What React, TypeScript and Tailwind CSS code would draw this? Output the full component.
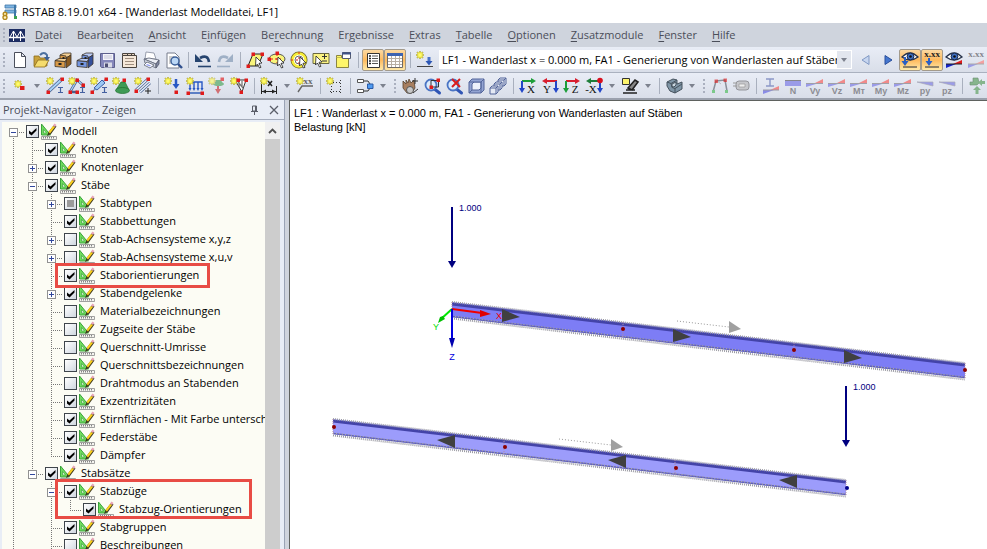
import React from 'react';
import clsx from 'clsx';

/* ---------- shared icon parts ---------- */

const Star = () => (
  <g>
    <path d="M5 1v8M1 5h8M2 2l6 6M8 2l-6 6" stroke="#a39c4a" strokeWidth="1.600" />
    <path d="M5 1.500v7M1.500 5h7M2.500 2.500l5 5M7.500 2.500l-5 5" stroke="#f8f03a" strokeWidth="1.200" />
    <circle cx="5" cy="5" r="1.800" fill="#fffa70" />
  </g>
);

const Dot = ({ x, y }: { x: number; y: number }) => (
  <rect x={x - 1.5} y={y - 1.5} width="3.5" height="3.5" fill="#e01b1b" />
);

const Profile = () => <path d="M13 11.500h5M15.500 11.500v5M13 16.500h5" stroke="#4460a0" strokeWidth="1.200" />;

const Cabinet = ({ front, top, side }: { front: string; top: string; side: string }) => (
  <g stroke="#3c3428" strokeWidth=".8" strokeLinejoin="round">
    <path d="M7 5l4-2h7v2l-5 3z" fill={top} />
    <path d="M13 8l5-3v9l-5 4z" fill={side} />
    <path d="M7 5l6 1v6l-6-.5z" fill={front} />
    <path d="M2 10.500l10 1v6l-10-1z" fill={front} />
    <path d="M2 10.500l4-2h8l-2 3z" fill={top} />
    <path d="M9.500 8h2M5.500 14h3" stroke="#222" strokeWidth="1.800" />
  </g>
);

const Diagram = ({ text, up }: { text: string; up?: boolean }) => (
  <g>
    {up ? (
      <>
        <path d="M1 8h10L1 11z" fill="#9a9be8" />
        <path d="M9 7.500L18 3v4.500z" fill="#f08a8a" />
        <path d="M1 7.500h17" stroke="#a0a0a8" strokeWidth="1" />
      </>
    ) : (
      <path d="M2 6h16v4L10 8z" fill="#9a9be8" stroke="#a9a9b4" strokeWidth=".7" />
    )}
    <text x="10" y="18" textAnchor="middle" fontSize="9" fontWeight="700" fill="#8d8d93" fontFamily="Liberation Sans, sans-serif">
      {text}
    </text>
  </g>
);

const ViewAxis = ({ text, a, b, flip }: { text: string; a: string; b: string; flip?: boolean }) => (
  <g>
    <path d={flip ? 'M17 5H6' : 'M4 5h11'} stroke={a} strokeWidth="2" />
    <path d={flip ? 'M7 2v6L2 5z' : 'M13 2v6l5-3z'} fill={a} />
    <path d={flip ? 'M16 5v9' : 'M4 5v9'} stroke={b} strokeWidth="2" />
    <path d={flip ? 'M13 12h6l-3 5z' : 'M1 12h6l-3 5z'} fill={b} />
    <text x={flip ? 7 : 13} y="17" textAnchor="middle" fontSize="11" fill="#111" fontFamily="Liberation Serif, serif">
      {text}
    </text>
  </g>
);

const Lens = () => (
  <g>
    <path d="M12.500 13l5 4" stroke="#2f55b5" strokeWidth="3" strokeLinecap="round" />
    <circle cx="9" cy="9" r="5.500" fill="#dcebfb" stroke="#4a74c4" strokeWidth="1.800" />
  </g>
);

const Eye = ({ y = 0 }: { y?: number }) => (
  <g transform={`translate(0 ${y})`}>
    <path d="M2 8Q10 0 18 8Q10 14 2 8z" fill="#fff" stroke="#26324a" strokeWidth="1.300" />
    <circle cx="10.500" cy="7.500" r="3.400" fill="#3e6fc2" stroke="#1c2b4d" />
    <circle cx="10.500" cy="7.500" r="1.300" fill="#111" />
  </g>
);

const XXX = ({ fill }: { fill: string }) => (
  <text x="10" y="7" textAnchor="middle" fontSize="9" fontWeight="700" fill={fill} fontFamily="Liberation Serif, serif">
    x.xx
  </text>
);

const Cursor = () => (
  <path d="M11 7l6 6-3 .3 2 4-1.500.7-2-4-2 2z" fill="#fff" stroke="#222" strokeWidth=".8" />
);

/* ---------- toolbar icons, 20 x 20 ---------- */

const icons: Record<string, React.ReactNode> = {
  'Neu': <path d="M5.500 2.500h7l4 4v11h-11z M12.500 2.500v4h4" fill="#fff" stroke="#4b4f5c" />,
  'Öffnen': (
    <g strokeLinejoin="round">
      <path d="M3 16V6h5l1 2h7v8z" fill="#c9a23c" stroke="#8a6b1c" strokeWidth=".8" />
      <path d="M3 17l4-7h11l-4 7z" fill="#f5dc6e" stroke="#8a6b1c" strokeWidth=".8" />
      <path d="M9 5q4-4 7 0v4" fill="none" stroke="#4b6f9f" strokeWidth="2" />
      <path d="M13 7h6l-3 4z" fill="#3d5f94" />
    </g>
  ),
  'Projekt-Manager': <Cabinet front="#d99a48" top="#f3cf95" side="#8a5a20" />,
  'Blockmanager': <Cabinet front="#7396e2" top="#b9caf5" side="#34509c" />,
  'Speichern': (
    <g>
      <path d="M3.500 3.500h14v14h-13l-1-1z" fill="#8587bb" stroke="#5d5f8c" />
      <path d="M6 4h10v6H6z" fill="#f4f4fa" />
      <path d="M7 6h8M7 8h8" stroke="#c5c5d6" />
      <path d="M7 12.500h8v5H7z" fill="#d9dae6" />
      <path d="M8 13.500h3v3.500H8z" fill="#4d4f74" />
    </g>
  ),
  'Protokoll': (
    <g stroke="#4a443f">
      <path d="M3.500 3.500h5v2h-5zM8.500 3.500h4v2h-4zM12.500 3.500h3v2h-3z" fill="#e8d4c0" />
      <path d="M3.500 5.500h14v12h-14z" fill="#f6e8d9" />
      <path d="M6 8.500h9M6 11.500h9M6 14.500h9" stroke="#a08f80" />
    </g>
  ),
  'Drucken': (
    <g strokeLinejoin="round" strokeWidth=".9">
      <path d="M4 9l1-7 8 1 2 6z" fill="#fff" stroke="#8e95a5" />
      <path d="M3 9l5-1 10 2-3 4z" fill="#eceff5" stroke="#6a7081" />
      <path d="M3 9l12 5v4L4 13z" fill="#cfd4de" stroke="#6a7081" />
      <path d="M15 14l3-4v4l-3 4z" fill="#8088a0" stroke="#5a6073" />
      <path d="M6 12l7 3-4 3-6-3z" fill="#fff" stroke="#6a7081" />
      <path d="M6 14l4 1.500-1 1-4-1.500z" fill="#8f9df0" />
    </g>
  ),
  'Druckvorschau': (
    <g>
      <path d="M4 3h8l4 4v11H4z" fill="#fff" stroke="#777d8c" />
      <path d="M6 7h5M6 9h3M6 11h2M6 13h3" stroke="#999" />
      <circle cx="12" cy="11" r="4" fill="#bcd8f6" stroke="#3b5f98" strokeWidth="1.400" />
      <path d="M15 14l4 4" stroke="#2f4f8d" strokeWidth="2.400" />
    </g>
  ),
  'Rückgängig': (
    <g>
      <path d="M7 8q8-4 9 4" fill="none" stroke="#26446f" strokeWidth="2.600" />
      <path d="M2 4v8h8z" fill="#26446f" />
      <path d="M5 16.500h13" stroke="#26446f" strokeWidth="1.600" />
    </g>
  ),
  'Wiederherstellen': (
    <g>
      <path d="M13 8q-8-4-9 4" fill="none" stroke="#9fb0c6" strokeWidth="2.600" />
      <path d="M18 4v8h-8z" fill="#9fb0c6" />
      <path d="M2 16.500h13" stroke="#9fb0c6" strokeWidth="1.600" />
    </g>
  ),
  'Auswahl Rhomboid': (
    <g>
      <path d="M3 16L8 4h10l-5 12z" fill="#f8f47a" stroke="#222" />
      <Dot x={3} y={16} /><Dot x={8} y={4} /><Dot x={17} y={4} />
      <Cursor />
    </g>
  ),
  'Auswahl Ellipse': (
    <g>
      <ellipse cx="10" cy="9" rx="8" ry="5" fill="#f8f47a" stroke="#555" />
      <path d="M10 4v9M4 9h12" stroke="#e01b1b" strokeDasharray="2 2" />
      <Dot x={2} y={9} /><Dot x={10} y={3} />
      <Cursor />
    </g>
  ),
  'Auswahl Ring': (
    <g>
      <circle cx="10" cy="10" r="6.500" stroke="#6b6526" strokeWidth="4" />
      <circle cx="10" cy="10" r="6.500" fill="#fff" stroke="#f8ee3a" strokeWidth="2.500" />
      <circle cx="10" cy="10" r="4" stroke="#444" strokeWidth=".8" />
      <path d="M10 2v14M2 10h14" stroke="#e01b1b" strokeDasharray="2 3" />
      <Cursor />
    </g>
  ),
  'Sonderauswahl': (
    <g>
      <path d="M2 3.500h16v10H2z" fill="#fbf382" stroke="#6a6840" />
      <path d="M11 6.500h5M13.500 4v5M11 11h5" stroke="#333" />
      <path d="M5 6l6 6-3 .3 2 4-1.500.7-2-4-2 2z" fill="#fff" stroke="#222" strokeWidth=".8" />
    </g>
  ),
  'Neues Fenster': (
    <g>
      <path d="M3.500 7.500h12v10h-12z" fill="#fdf56a" stroke="#8b8540" />
      <path d="M3.500 7.500v-2h5v2" fill="#fdf56a" stroke="#8b8540" />
      <path d="M9.500 2.500h8v6h-8z" fill="#fff" stroke="#555b70" />
      <path d="M9 3.500h9" stroke="#3f5387" strokeWidth="2" />
    </g>
  ),
  'Navigator': (
    <g>
      <path d="M4.500 3.500h12v14h-12z" fill="#fff" stroke="#333" />
      <path d="M6 6h2M6 8.500h2M6 11h2M6 13.500h2" stroke="#222" strokeWidth="1.500" />
      <path d="M9 6h6M9 8.500h6M9 11h6M9 13.500h6" stroke="#555" strokeWidth="1.200" />
    </g>
  ),
  'Tabellen': (
    <g>
      <path d="M2.500 3.500h15v14h-15z" fill="#fff" stroke="#6d6a66" />
      <path d="M2 4.500h16" stroke="#3d63b0" strokeWidth="3" />
      <path d="M3 8.500h14M3 11.500h14M3 14.500h14M6.500 6v11M10.500 6v11M14.500 6v11" stroke="#b7aea3" />
    </g>
  ),
  'Neuer Lastfall': (
    <g>
      <Star />
      <path d="M2 16.500h16" stroke="#444" />
      <path d="M14 7v5" stroke="#4a74c8" strokeWidth="3" />
      <path d="M10.500 11h7L14 15.500z" fill="#2d57b5" />
    </g>
  ),
  'Vorheriger Lastfall': <path d="M13 5.500v9l-7-4.500z" fill="#c7d6f0" stroke="#8199c4" />,
  'Nächster Lastfall': <path d="M7 5.500v9l7-4.500z" fill="#4476cf" stroke="#2a4f9c" />,
  'Belastung anzeigen': (
    <g>
      <Eye y={-1} />
      <path d="M5 7v6" stroke="#2b5fc4" strokeWidth="2" />
      <path d="M1.500 11h7L5 16z" fill="#2b5fc4" />
      <path d="M3 17h14" stroke="#444" strokeWidth="1.200" />
    </g>
  ),
  'Lastwerte anzeigen': (
    <g>
      <XXX fill="#222" />
      <path d="M7 8v5" stroke="#2b5fc4" strokeWidth="2" />
      <path d="M3.500 11h7L7 16z" fill="#2b5fc4" />
      <path d="M3 17h14" stroke="#444" strokeWidth="1.200" />
    </g>
  ),
  'Ergebnisse anzeigen': (
    <g>
      <Eye y={-1} />
      <path d="M2 14h10L2 18z" fill="#1522c8" />
      <path d="M9 14l9-4v4z" fill="#e01b1b" />
      <path d="M2 14h16" stroke="#222" />
    </g>
  ),
  'Ergebniswerte anzeigen': (
    <g>
      <XXX fill="#85858d" />
      <path d="M2 14h10L2 18z" fill="#9a9be8" />
      <path d="M9 14l9-4v4z" fill="#f3a1a1" />
      <path d="M2 14h16" stroke="#aaa" />
    </g>
  ),

  'Neuer Knoten': (
    <g>
      <g transform="translate(4 3)"><Star /></g>
      <path d="M11 10h4.500v4H11z" fill="#e01b1b" />
    </g>
  ),
  'Neuer Stab': (
    <g>
      <path d="M3 16L17 3" stroke="#4a5f8c" strokeWidth="3.500" />
      <path d="M3 16L17 3" stroke="#a9d4f8" strokeWidth="2" />
      <Star /><Dot x={3} y={16} /><Dot x={17} y={3} />
      <Profile />
    </g>
  ),
  'Neuer Stabzug': (
    <g>
      <path d="M3 16L10 4l6 5M3 16h7" stroke="#4a5f8c" strokeWidth="2.500" />
      <path d="M3 16L10 4l6 5" stroke="#a9d4f8" strokeWidth="1.200" />
      <Star /><Dot x={3} y={16} /><Dot x={10} y={4} /><Dot x={16} y={9} /><Dot x={10} y={16} />
      <Profile />
    </g>
  ),
  'Neuer Stab mit Fläche': (
    <g>
      <path d="M3 16L17 3" stroke="#7b8fb8" strokeWidth="1.500" />
      <path d="M5 12l8-8 3 3-8 7z" fill="#9cc8f5" stroke="#3d5fa6" />
      <Star /><Dot x={3} y={16} /><Dot x={17} y={3} />
      <Profile />
    </g>
  ),
  'Neues Knotenlager': (
    <g>
      <path d="M10 6h4l4 8H5z" fill="#3f9a55" stroke="#1e6e2b" strokeWidth=".7" />
      <ellipse cx="11.500" cy="14.500" rx="7" ry="3" fill="#3f9a55" stroke="#1e6e2b" strokeWidth=".7" />
      <Star /><Dot x={13} y={4} />
    </g>
  ),
  'Stab teilen': (
    <g>
      <path d="M3 14L15 3M7 16L17 7" stroke="#4a5f8c" strokeWidth="2.800" />
      <path d="M3 14L15 3M7 16L17 7" stroke="#e6f2fd" strokeWidth="1.400" />
      <Star /><Dot x={3} y={15} /><Dot x={15} y={3} />
      <path d="M15 12v6M12 15h6" stroke="#222" />
    </g>
  ),
  'Neue Knotenlast': (
    <g>
      <Star />
      <path d="M13 3v6" stroke="#2858c4" strokeWidth="2.500" />
      <path d="M9.500 8h7L13 13z" fill="#2858c4" />
      <Dot x={13} y={16} />
    </g>
  ),
  'Neue Stablast': (
    <g>
      <path d="M5 6h12v7M5 6v7M9 6v7M13 6v7" stroke="#2858c4" strokeWidth="1.400" />
      <path d="M3.500 12h3L5 15zM7.500 12h3L9 15zM11.500 12h3L13 15zM15.500 12h3L17 15z" fill="#2858c4" />
      <path d="M3 17h15" stroke="#5c7fc5" strokeWidth="2" />
      <Star /><Dot x={3} y={17} /><Dot x={17} y={17} />
    </g>
  ),
  'Neue Zwangsverformung': (
    <g opacity=".65">
      <path d="M11 6v9" stroke="#c33" strokeWidth="2" />
      <path d="M8 13h6l-3 5z" fill="#c33" />
      <path d="M9 4h5l2 4H7z" fill="#4aa35a" />
      <ellipse cx="11.500" cy="8" rx="5.500" ry="2" fill="#4aa35a" />
      <Star /><Dot x={15} y={3} />
    </g>
  ),
  'Lasten generieren': (
    <g>
      <path d="M6 4h11l-4 12z" fill="#fff" stroke="#333" />
      <path d="M10 5v6M13 5v6M9 6l5 6" stroke="#777" strokeWidth="1.300" />
      <Star /><Dot x={9} y={4} /><Dot x={17} y={4} /><Dot x={12} y={16} />
    </g>
  ),
  'Neue Bemaßung': (
    <g>
      <path d="M2.500 6v12M17.500 10v8M3 15.500h14" stroke="#222" />
      <path d="M3 15.500l4-2v4zM17 15.500l-4-2v4z" fill="#222" />
      <path d="M9 5l4 5M13 5l-4 5" stroke="#222" strokeWidth="1.500" />
      <Star />
    </g>
  ),
  'Neuer Kommentar': (
    <g>
      <path d="M3 16l4-6h11" stroke="#666" strokeWidth="1.400" />
      <text x="13" y="8" textAnchor="middle" fontSize="9" fontWeight="700" fill="#666" fontFamily="Liberation Serif, serif">xx</text>
      <Star />
    </g>
  ),
  'Neue Hilfslinie': (
    <g>
      <path d="M5 6.500h12M5 15.500h12M6.500 4v14M15.500 4v14" stroke="#333" strokeDasharray="1 2" />
      <Star />
    </g>
  ),
  'Kopplungen': (
    <g>
      <path d="M2.500 3.500h6v3h-6zM2.500 13.500h6v3h-6z" fill="#fff" stroke="#555" />
      <path d="M9 5h4l2 3M9 15h4l2-3" stroke="#333" />
      <path d="M12.500 8h5.500v4.500h-5.500z" fill="#4f9af0" stroke="#2a5ba8" />
    </g>
  ),
  'Bewegen': (
    <g>
      <path d="M3 5l3 3V4l2 3 1-4 2 4 3-3 1 8-3 5H7L3 12z" fill="#a87f60" stroke="#56412f" strokeWidth=".8" />
      <circle cx="10" cy="14" r="3.500" fill="#c8c8c8" stroke="#555" />
      <path d="M12 5h6M15 2v6M13 17l5-4" stroke="#333" />
    </g>
  ),
  'Zoomfenster': <g><Lens /><path d="M9 4.500h7.500V11H9z" stroke="#333" /><Dot x={16} y={4} /><Dot x={9} y={11} /></g>,
  'Zoom zurück': <g><Lens /><path d="M8 3l8 8M16 3l-8 8" stroke="#d81e1e" strokeWidth="2" /></g>,
  'Isometrie': (
    <g fill="#93a4d2" stroke="#53659a" strokeLinejoin="round">
      <path d="M3 6l3-3h12v11l-3 3H3z" />
      <path d="M6 8l2-2h7v6l-2 2H6z" fill="#eef2fb" />
      <path d="M3 17l3-3M15 17V6M3 6h12l3-3" />
    </g>
  ),
  'Ansicht wechseln': (
    <g fill="#e4e9f4" stroke="#53659a" strokeLinejoin="round">
      <path d="M10 4l2-2h6v6l-2 2h-6zM10 4h6v6M16 4l2-2" />
      <path d="M6 8l2-2h6v6l-2 2H6zM6 8h6v6M12 8l2-2" />
      <path d="M2 12l2-2h6v6l-2 2H2zM2 12h6v6M8 12l2-2" />
    </g>
  ),
  'Ansicht in X': <ViewAxis text="X" a="#1e9e3a" b="#2346c8" />,
  'Ansicht in Y': <ViewAxis text="Y" a="#d81e2e" b="#2346c8" flip />,
  'Ansicht in Z': <ViewAxis text="Z" a="#d81e2e" b="#1e9e3a" />,
  'Ansicht in -X': (
    <g><ViewAxis text="-X" a="#1e7e3a" b="#2346c8" flip /><circle cx="16" cy="4.500" r="2.800" fill="#d8101e" /></g>
  ),
  'Sichtbarkeiten': (
    <g>
      <path d="M3 17h14M6 14h9M8 12l7-8 3 2-6 8z" stroke="#222" fill="#888" strokeWidth="1.600" />
      <path d="M2.500 2.500h7v6h-7z" fill="#fdf46c" stroke="#333" />
    </g>
  ),
  'Rendering': (
    <g stroke="#46535e" strokeLinejoin="round">
      <path d="M3 6l6-3 4 1v4l5-2v7l-7 4-5-2-3-5z" fill="#7f95a6" />
      <path d="M3 6l4 1.500 6-3.500M7 7.500l1 4 3 1 7-4.500M11 12.500V17" />
      <path d="M8 8l4-2v3l-2 2-2-.5z" fill="#c9d6df" />
    </g>
  ),
  'Struktur': (
    <g>
      <path d="M4 16L7 5l9-1 2 11" stroke="#8a8f9a" strokeWidth="1.500" />
      <path d="M7 4l5 4" stroke="#b9bcc4" />
      <g opacity=".6"><Dot x={7} y={5} /><Dot x={16} y={4} /></g>
      <path d="M3 14h3v3H3zM16 14h3v3h-3z" fill="#7cc98b" />
    </g>
  ),
  'Animation': (
    <g>
      <rect x="5" y="5" width="13" height="9" rx="3" fill="#c6c7cb" stroke="#94959b" />
      <path d="M2 7h4M2 10h4" stroke="#999" />
      <path d="M8 8h6v3H8z" fill="#eee" stroke="#999" strokeWidth=".7" />
    </g>
  ),
  'Querschnitt': (
    <g>
      <path d="M5 3h8M9 3v7M5 10h8" stroke="#8c98c8" strokeWidth="1.400" />
      <path d="M2 14h11L2 18z" fill="#8a8ce6" />
      <path d="M9 14l9-4v4z" fill="#f08a8a" />
      <path d="M2 14h16" stroke="#9a9aa4" />
    </g>
  ),
  'N': (
    <g>
      <path d="M2 5h16v5H2z" fill="#9a9be8" />
      <path d="M2 4.500h16" stroke="#86868c" />
      <text x="10" y="18" textAnchor="middle" fontSize="9" fontWeight="700" fill="#8d8d93" fontFamily="Liberation Sans, sans-serif">N</text>
    </g>
  ),
  'Vy': <Diagram text="Vy" up />,
  'Vz': <Diagram text="Vz" up />,
  'MT': <Diagram text="Mт" up />,
  'My': <Diagram text="My" up />,
  'Mz': <Diagram text="Mz" up />,
  'py': <Diagram text="py" />,
  'pz': <Diagram text="pz" />,
  'Lagerkräfte': (
    <g fill="#86b58c">
      <path d="M6 2h5l1 5-2 2H3V6h3z" stroke="#6d8f72" strokeWidth=".6" />
      <path d="M18 5h-3V3l-4 3.500L15 10V8h3z" />
      <path d="M8.500 18v-4H6l4-4 4 4h-2.500v4z" />
    </g>
  ),
};

/* ---------- toolbars ---------- */

const Grip = () => (
  <span className="flex w-2 shrink-0 flex-col items-center gap-[2px]">
    {[0, 1, 2, 3].map((i) => (
      <i key={i} className="size-[2px] bg-[#aab0bf]" />
    ))}
  </span>
);

const Separator = () => (
  <span className="flex w-2 shrink-0 justify-center">
    <i className="h-4 w-px bg-[#a9b0be]" />
  </span>
);

const DropArrow = ({ label }: { label: string }) => (
  <button aria-label={label} className="flex h-[22px] w-[14px] shrink-0 items-center justify-center">
    <svg width="6" height="4" viewBox="0 0 6 4">
      <path d="M0 0h6L3 4z" fill="#7d828e" />
    </svg>
  </button>
);

const ToolButton = ({ name, active }: { name: string; active?: boolean }) => (
  <button
    aria-label={name}
    aria-pressed={active}
    className={clsx(
      'flex h-[22px] w-[22px] shrink-0 items-center justify-center',
      active && 'rounded-xs border border-[#a39a8b] bg-linear-to-b from-[#fbd9a2] via-[#fdb95c] to-[#fee9a8]',
    )}
  >
    <svg width="20" height="20" viewBox="0 0 20 20" className="shrink-0" fill="none">
      {icons[name]}
    </svg>
  </button>
);

// '|' separator, ':' grip, 'v' drop-down arrow, leading '*' pressed button
const Tools = ({ items }: { items: string[] }) => (
  <>
    {items.map((item, i) => {
      if (item === '|') return <Separator key={i} />;
      if (item === ':') return <Grip key={i} />;
      if (item === 'v') return <DropArrow key={i} label={`${items[i - 1]} Optionen`} />;
      return <ToolButton key={i} name={item.replace('*', '')} active={item.startsWith('*')} />;
    })}
  </>
);

const mainTools = [
  ':', 'Neu', 'Öffnen', 'Projekt-Manager', 'Blockmanager', 'Speichern', 'Protokoll', 'Drucken', 'Druckvorschau', '|',
  'Rückgängig', 'Wiederherstellen', '|',
  'Auswahl Rhomboid', 'Auswahl Ellipse', 'Auswahl Ring', 'Sonderauswahl', 'Neues Fenster', '|',
  '*Navigator', '*Tabellen', '|', 'Neuer Lastfall',
];

const loadTools = [
  'Vorheriger Lastfall', 'Nächster Lastfall', '*Belastung anzeigen', '*Lastwerte anzeigen', 'Ergebnisse anzeigen',
  'Ergebniswerte anzeigen',
];

const insertTools = [
  ':', 'Neuer Knoten', 'v', 'Neuer Stab', 'Neuer Stabzug', 'Neuer Stab mit Fläche', 'Neues Knotenlager', 'Stab teilen', '|',
  'Neue Knotenlast', 'Neue Stablast', 'Neue Zwangsverformung', 'Lasten generieren', '|',
  'Neue Bemaßung', 'v', 'Neuer Kommentar', '|', 'Neue Hilfslinie', '|', 'Kopplungen', 'v',
];

const viewTools = [
  ':', 'Bewegen', 'Zoomfenster', 'Zoom zurück', 'Isometrie', 'Ansicht wechseln', '|',
  'Ansicht in X', 'Ansicht in Y', 'Ansicht in Z', 'Ansicht in -X', 'v', 'Sichtbarkeiten', 'v', '|', 'Rendering', 'v',
];

const resultTools = [
  ':', 'Struktur', 'Animation', '|', 'Querschnitt', 'N', 'Vy', 'Vz', 'MT', 'My', 'Mz', 'py', 'pz', '|', 'Lagerkräfte',
];

// label and index of the underlined access key
const menus: [string, number][] = [
  ['Datei', 0], ['Bearbeiten', 9], ['Ansicht', 0], ['Einfügen', 1], ['Berechnung', 2], ['Ergebnisse', 2],
  ['Extras', 0], ['Tabelle', 0], ['Optionen', 0], ['Zusatzmodule', 0], ['Fenster', 0], ['Hilfe', 0],
];

const TopBars = () => (
  <header className="shrink-0">
    <div className="flex h-[23px] items-center gap-[5px] bg-white pl-[2px]">
      <svg width="15" height="16" viewBox="0 0 15 16">
        <path d="M3 1h11v3H3zM3 6h11v3H3z" fill="#7db4e2" stroke="#3f76a8" strokeWidth=".8" />
        <path d="M13 1v13" stroke="#3d77a8" strokeWidth="2" />
        <path d="M12 12h3v3h-3z" fill="#3aa050" />
        <circle cx="3" cy="10" r="1.800" fill="#fff3c0" stroke="#b58a1e" strokeWidth="1.400" />
        <circle cx="3" cy="13.500" r="2" fill="#fff3c0" stroke="#b58a1e" strokeWidth="1.400" />
      </svg>
      <h1 className="text-[11px] leading-4 text-black">RSTAB 8.19.01 x64 - [Wanderlast Modelldatei, LF1]</h1>
    </div>

    <nav className="flex h-6 items-center bg-[#cfd4dd]">
      <Grip />
      <svg width="18" height="15" viewBox="0 0 18 15" className="mr-[9px]">
        <path d="M1 1h16v13H1z" fill="#1d2d63" />
        <path d="M1 9.500h16" stroke="#fff" strokeWidth="1.500" />
        <path d="M5.500 3v10M12.500 3v10M5.500 3L2 9M5.500 3L9 9L12.500 3L16 9" stroke="#fff" fill="none" />
      </svg>
      <div className="flex gap-[15px]">
        {menus.map(([label, key]) => (
          <button key={label} className="text-[11px] leading-4 text-[#4b4e59]">
            {label.slice(0, key)}
            <span className="underline underline-offset-2">{label[key]}</span>
            {label.slice(key + 1)}
          </button>
        ))}
      </div>
    </nav>

    <div className="flex h-[26px] items-center border-b border-[#aab1bf] bg-linear-to-b from-[#e9edf6] to-[#d9dee9]">
      <Tools items={mainTools} />
      <div className="mr-[3px] ml-[3px] flex h-[19px] min-w-0 flex-1 border border-white bg-white">
        <select
          aria-label="Lastfall"
          className="h-full min-w-0 flex-1 appearance-none overflow-hidden bg-white pl-[2px] text-[11px] leading-4 text-black"
        >
          <option>LF1 - Wanderlast x = 0.000 m, FA1 - Generierung von Wanderlasten auf Stäben</option>
        </select>
        <span className="pointer-events-none flex w-[14px] items-center justify-center bg-[#e2e6ee]">
          <svg width="6" height="4" viewBox="0 0 6 4">
            <path d="M0 0h6L3 4z" fill="#7d828e" />
          </svg>
        </span>
      </div>
      <Tools items={loadTools} />
    </div>

    <div className="flex h-[27px] items-center gap-px overflow-hidden border-b-2 border-[#9ba1ad] bg-linear-to-b from-[#e9edf6] to-[#d9dee9]">
      <div className="flex items-center">
        <Tools items={insertTools} />
      </div>
      <div className="flex items-center">
        <Tools items={viewTools} />
      </div>
      <div className="flex items-center">
        <Tools items={resultTools} />
      </div>
    </div>
  </header>
);

/* ---------- navigator ---------- */

type Row = {
  label: string;
  guides: string; // one character per parent level, '|' draws its line
  box?: '+' | '-';
  state?: 'on' | 'off' | 'mixed';
  last?: boolean;
  mark?: string;
};

const rows: Row[] = [
  { label: 'Modell', guides: '', box: '-' },
  { label: 'Knoten', guides: '|' },
  { label: 'Knotenlager', guides: '|', box: '+' },
  { label: 'Stäbe', guides: '|', box: '-' },
  { label: 'Stabtypen', guides: '||', box: '+', state: 'mixed' },
  { label: 'Stabbettungen', guides: '||' },
  { label: 'Stab-Achsensysteme x,y,z', guides: '||', box: '+', state: 'off' },
  { label: 'Stab-Achsensysteme x,u,v', guides: '||', box: '+', state: 'off' },
  { label: 'Staborientierungen', guides: '||', mark: 'h-[25px] w-[155px]' },
  { label: 'Stabendgelenke', guides: '||', box: '+' },
  { label: 'Materialbezeichnungen', guides: '||', state: 'off' },
  { label: 'Zugseite der Stäbe', guides: '||', state: 'off' },
  { label: 'Querschnitt-Umrisse', guides: '||', state: 'off' },
  { label: 'Querschnittsbezeichnungen', guides: '||', state: 'off' },
  { label: 'Drahtmodus an Stabenden', guides: '||', state: 'off' },
  { label: 'Exzentrizitäten', guides: '||' },
  { label: 'Stirnflächen - Mit Farbe unterscheiden', guides: '||' },
  { label: 'Federstäbe', guides: '||' },
  { label: 'Dämpfer', guides: '||', last: true },
  { label: 'Stabsätze', guides: '|', box: '-', last: true },
  { label: 'Stabzüge', guides: '| ', box: '-', mark: 'h-[40px] w-[197px]' },
  { label: 'Stabzug-Orientierungen', guides: '| |', last: true },
  { label: 'Stabgruppen', guides: '| ' },
  { label: 'Beschreibungen', guides: '| ', state: 'off' },
];

const RowIcon = () => (
  <svg width="16" height="17" viewBox="0 0 16 17" className="mr-[5px] ml-[2px] shrink-0">
    <path d="M.5 1v11h9z" fill="#6fdc5e" stroke="#3aa33c" />
    <path d="M2.500 6.500v3.500h3z" fill="#fdfdf5" stroke="#3aa33c" strokeWidth=".7" />
    <path d="M6 13l1.500-4L13 2l2.500 1.500L10 11z" fill="#3f3a20" />
    <path d="M7.500 9L12 3l2 1-5 6.500z" fill="#fbd01e" />
    <path d="M12 2.500L13.500.5l2 1.500-1.500 2z" fill="#e8a4b8" />
    <path d="M.5 13.500h15v3H.5z" fill="#f5f5f0" stroke="#8a8a8a" strokeWidth=".8" />
    <path d="M2.500 14v1.500M4.500 14v1.500M6.500 14v1.500M8.500 14v1.500M10.500 14v1.500M12.500 14v1.500" stroke="#777" strokeWidth=".9" />
  </svg>
);

const TreeRow = ({ row }: { row: Row }) => {
  const { label, guides, box, state = 'on', last, mark } = row;
  return (
    <li className="relative flex h-[18px] items-center">
      {guides.split('').map((g, i) => (
        <svg key={i} width="19" height="18" className="shrink-0">
          {g === '|' && <path d="M9.500 0v18" stroke="#777" strokeDasharray="1 1" />}
        </svg>
      ))}
      <svg width="22" height="18" className="shrink-0" shapeRendering="crispEdges">
        <path
          d={`M9.500 ${guides ? 0 : 10}V${last ? 10 : 18}M9 10.500h12`}
          stroke="#777"
          strokeDasharray="1 1"
          fill="none"
        />
        {box && (
          <>
            <rect x="5.500" y="6.500" width="8" height="8" fill="#fff" stroke="#919191" />
            <path d={box === '+' ? 'M7 10.500h5M9.500 8v5' : 'M7 10.500h5'} stroke="#31479c" />
          </>
        )}
      </svg>
      <label className="flex items-center text-[11px] leading-[18px] whitespace-nowrap text-black">
        <span className="grid shrink-0">
          <input
            type="checkbox"
            defaultChecked={state === 'on'}
            className="peer col-start-1 row-start-1 size-[13px] appearance-none border border-[#3f454c] bg-linear-to-br from-white to-[#d0d7e0]"
          />
          <svg viewBox="0 0 13 13" className="pointer-events-none invisible col-start-1 row-start-1 size-[13px] peer-checked:visible">
            <path d="M3 5.500v3L5.500 10.500L10.500 5.500V3L5.500 7.500z" fill="#000" />
          </svg>
          {state === 'mixed' && <i className="col-start-1 row-start-1 m-[3px] bg-[#9a9a9a]" />}
        </span>
        <RowIcon />
        {label}
      </label>
      {mark && <span className={clsx('absolute -top-[3px] left-[51px] z-10 border-[3px] border-[#e84c45]', mark)} />}
    </li>
  );
};

const Navigator = () => (
  <aside className="flex w-[285px] shrink-0 flex-col border-r border-[#9aa3b5] bg-[#e8edf6]">
    <div className="flex h-[20px] shrink-0 items-center border-b border-[#a3abba] pr-[5px] pl-[3px]">
      <h2 className="flex-1 text-[11px] leading-4 text-[#4a4e59]">Projekt-Navigator - Zeigen</h2>
      <button aria-label="Anheften" className="mr-[10px]">
        <svg width="9" height="10" viewBox="0 0 9 10" fill="none" stroke="#5a5e69">
          <path d="M2.500 1h4v5h-4zM5.500 1v5M1 6.500h7M4.500 6v4" />
        </svg>
      </button>
      <button aria-label="Schließen">
        <svg width="10" height="10" viewBox="0 0 10 10" stroke="#5a5e69" strokeWidth="1.300">
          <path d="M1 1l8 8M9 1L1 9" />
        </svg>
      </button>
    </div>
    <div className="mt-[2px] mr-1 ml-[2px] flex min-h-0 flex-1">
      <ul className="min-w-0 flex-1 overflow-hidden bg-[#fcfcf4] pl-[2px]">
        {rows.map((row) => (
          <TreeRow key={row.label} row={row} />
        ))}
      </ul>
      <div className="flex w-[15px] shrink-0 flex-col bg-[#cdcdcd]">
        <button aria-label="Nach oben" className="flex h-[17px] items-center justify-center bg-[#f0f0f0]">
          <svg width="9" height="6" viewBox="0 0 9 6" fill="none" stroke="#505050" strokeWidth="1.800">
            <path d="M1 5l3.500-3.500L8 5" />
          </svg>
        </button>
      </div>
    </div>
  </aside>
);

/* ---------- model view ---------- */

const Beam = ({ x, y, fill }: { x: number; y: number; fill: string }) => (
  <g transform={`translate(${x} ${y})`}>
    <path d="M0 0l513 61v15L0 15z" fill={fill} />
    <path d="M0 2l513 61" stroke="#4343a8" strokeWidth="3" />
    <path d="M0 14.500l513 61" stroke="#6060b8" strokeWidth="1.500" />
    <path d="M0 14l513 61" stroke="#b5b19a" strokeWidth="1" strokeDasharray="1 2" />
    <path d="M0 0l513 61M0 16.500l513 61" stroke="#9a9aa2" strokeWidth="2" strokeDasharray="1 1" />
    <path d="M0 0v16M513 61v16M171 20v16M342 41v16" stroke="#b08aa8" strokeDasharray="1 1" />
  </g>
);

const Load = ({ x, y }: { x: number; y: number }) => (
  <g transform={`translate(${x} ${y})`} fill="#000080">
    <path d="M0 0v55" stroke="#000080" strokeWidth="2" />
    <path d="M-4 54h8l-4 7z" />
    <text x="7" y="4" fontSize="9">1.000</text>
  </g>
);

const MemberArrow = ({ x, y, left }: { x: number; y: number; left?: boolean }) => (
  <path transform={`translate(${x} ${y})`} d={left ? 'M0 0v13L-18 5z' : 'M0 0v13l18-5z'} fill="#404040" />
);

const nodes: [number, number, string][] = [
  [333, 228, '#8b0000'], [504, 249, '#8b0000'], [675, 269, '#8b0000'],
  [44, 326, '#8b0000'], [215, 346, '#8b0000'], [386, 367, '#8b0000'], [557, 387, '#00008b'],
];

const ModelView = () => (
  <main className="relative min-w-0 flex-1 overflow-hidden border-t border-l border-[#5f625f] bg-white pt-[5px] pl-1">
    <p className="text-[11px] leading-[14px] whitespace-nowrap text-black font-['Liberation_Sans',sans-serif]">
      LF1 : Wanderlast x = 0.000 m, FA1 - Generierung von Wanderlasten auf Stäben
      <br />
      Belastung [kN]
    </p>
    <svg className="absolute inset-0 size-full font-['Liberation_Sans',sans-serif]" fill="none">
      <Beam x={162} y={201} fill="#7d7df5" />
      <Beam x={43} y={318} fill="#9c9cfb" />

      <MemberArrow x={212} y={208} />
      <MemberArrow x={383} y={228} />
      <MemberArrow x={554} y={249} />
      <MemberArrow x={165} y={334} left />
      <MemberArrow x={336} y={354} left />
      <MemberArrow x={507} y={374} left />

      <path d="M387 220l52 6M269 338l52 6" stroke="#999" strokeDasharray="1 2" />
      <path d="M439 220v12l12-4zM321 338v12l12-4z" fill="#a0a0a0" />

      {nodes.map(([cx, cy, color]) => (
        <circle key={cx} cx={cx} cy={cy} r="2" fill={color} />
      ))}

      <path d="M162 208l30 4" stroke="#f00000" strokeWidth="2" />
      <path d="M190 209l11 4-11 3z" fill="#e00000" />
      <path d="M162 208l-11 10" stroke="#00e800" strokeWidth="2" />
      <path d="M153 215l2 3-7 4 2-6z" fill="#00c000" />
      <path d="M162 208v32" stroke="#0000e0" strokeWidth="2" />
      <path d="M159 237h6l-3 10z" fill="#0000b0" />
      <g fontSize="9" textAnchor="middle">
        <text x="209" y="218" fill="#f00000">X</text>
        <text x="146" y="229" fill="#00e000">Y</text>
        <text x="162" y="259" fill="#0000e0">Z</text>
      </g>

      <Load x={162} y={106} />
      <Load x={556} y={285} />
    </svg>
  </main>
);

const App: React.FC = () => {
  return (
    <div className="flex h-screen flex-col overflow-hidden bg-[#cfd4dd] font-['Open_Sans',sans-serif]">
      <TopBars />
      <div className="flex min-h-0 flex-1 gap-1">
        <Navigator />
        <ModelView />
      </div>
    </div>
  );
};

export default App;
